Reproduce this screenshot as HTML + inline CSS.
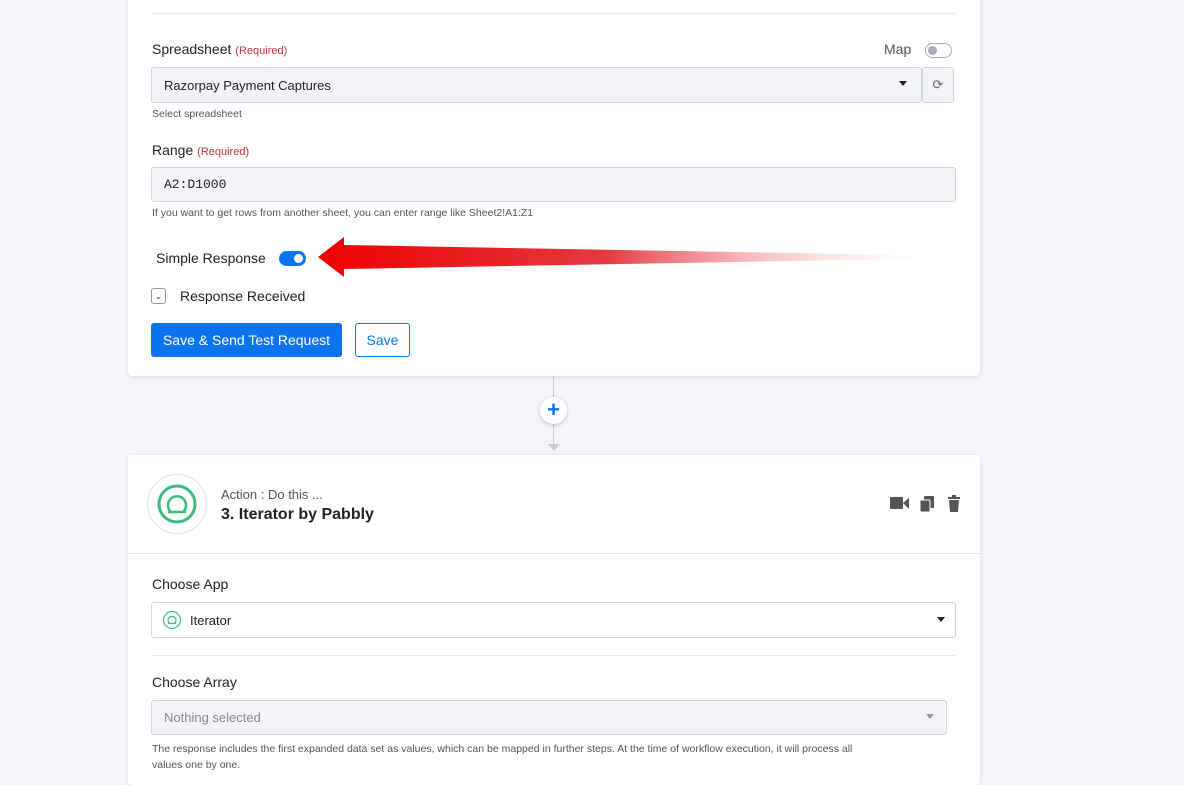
<!DOCTYPE html>
<html><head><meta charset="utf-8"><style>
*{box-sizing:border-box;margin:0;padding:0}
body{width:1184px;height:775px;background:#f3f5f8;font-family:"Liberation Sans",sans-serif;position:relative;overflow:hidden;color:#222}
.card{position:absolute;left:128px;width:852px;background:#fff;border-radius:4px;box-shadow:0 1px 4px rgba(0,0,0,.12)}
.abs{position:absolute}
.lbl{font-size:14px;color:#222}
.req{font-size:11px;color:#c4343f}
.inp{position:absolute;background:#f2f4f7;border:1px solid #cfd5dc;border-radius:3px;font-size:13px;color:#222;padding-left:12px;display:flex;align-items:center}
.help{font-size:10.5px;color:#555}
.caret{position:absolute;width:0;height:0;border-left:4px solid transparent;border-right:4px solid transparent;border-top:5px solid #222}
</style></head><body>
<div class="card" style="top:-5px;height:381px">
  <div class="abs" style="left:24px;top:18px;width:804px;height:1px;background:#e8eaee"></div>
  <div class="abs lbl" style="left:24px;top:46px">Spreadsheet <span class="req">(Required)</span></div>
  <div class="abs lbl" style="left:756px;top:46px;color:#555">Map</div>
  <div class="abs" style="left:797px;top:48px;width:27px;height:15px;border:1px solid #aab;border-radius:8px"><div style="position:absolute;left:2px;top:2px;width:9px;height:9px;border-radius:50%;background:#aab"></div></div>
  <div class="inp" style="left:23px;top:72px;width:771px;height:36px">Razorpay Payment Captures</div>
  <div class="caret" style="left:771px;top:86px"></div>
  <div class="inp" style="left:794px;top:72px;width:32px;height:36px;padding:0;justify-content:center;color:#666;font-size:13px">⟳</div>
  <div class="abs help" style="left:24px;top:113px">Select spreadsheet</div>
  <div class="abs lbl" style="left:24px;top:147px">Range <span class="req">(Required)</span></div>
  <div class="inp" style="left:23px;top:172px;width:805px;height:35px;font-family:'Liberation Mono',monospace;font-size:13px">A2:D1000</div>
  <div class="abs help" style="left:24px;top:212px">If you want to get rows from another sheet, you can enter range like Sheet2!A1:Z1</div>
  <div class="abs lbl" style="left:28px;top:255px">Simple Response</div>
  <div class="abs" style="left:151px;top:256px;width:27px;height:15px;background:#0a74ef;border-radius:8px"><div style="position:absolute;right:3px;top:3px;width:9px;height:9px;border-radius:50%;background:#fff"></div></div>
  <svg class="abs" style="left:190px;top:240px" width="640" height="45"><defs><linearGradient id="g" x1="0" x2="1"><stop offset="0" stop-color="#f00000"/><stop offset=".45" stop-color="#e33a40"/><stop offset="1" stop-color="#fff" stop-opacity="0"/></linearGradient></defs><polygon points="0,22 26,2 26,10 640,21 640,23 26,34 26,42" fill="url(#g)"/></svg>
  <div class="abs" style="left:23px;top:293px;width:15px;height:16px;border:1px solid #999;border-radius:3px;font-size:9px;text-align:center;line-height:14px;color:#333">⌄</div>
  <div class="abs lbl" style="left:52px;top:293px">Response Received</div>
  <div class="abs" style="left:23px;top:328px;width:191px;height:34px;background:#0a74ef;border-radius:3px;color:#fff;font-size:14px;text-align:center;line-height:34px">Save &amp; Send Test Request</div>
  <div class="abs" style="left:227px;top:328px;width:55px;height:34px;border:1px solid #0a74ef;border-radius:3px;color:#0a74ef;font-size:14px;text-align:center;line-height:32px">Save</div>
</div>
<div class="abs" style="left:553px;top:376px;width:1px;height:70px;background:#c8ccd2"></div>
<div class="abs" style="left:540px;top:397px;width:27px;height:27px;border-radius:50%;background:#fff;box-shadow:0 1px 4px rgba(0,0,0,.2);color:#0a74ef;font-size:22px;font-weight:bold;text-align:center;line-height:26px">+</div>
<div class="abs" style="left:548px;top:444px;border-left:6px solid transparent;border-right:6px solid transparent;border-top:7px solid #c8ccd2"></div>
<div class="card" style="top:455px;height:330px">
  <div class="abs" style="left:19px;top:19px;width:60px;height:60px;border-radius:50%;border:1px solid #dde3ee"></div>
  <svg class="abs" style="left:28px;top:28px" width="42" height="42" viewBox="0 0 42 42"><circle cx="21" cy="21" r="18" fill="none" stroke="#3dba7e" stroke-width="3"/><path d="M15 29 A9 9 0 1 1 27 29" fill="none" stroke="#3dba7e" stroke-width="2.5"/><path d="M12 29 H30" stroke="#3dba7e" stroke-width="2.5"/></svg>
  <div class="abs" style="left:93px;top:32px;font-size:13px;color:#555">Action : Do this ...</div>
  <div class="abs" style="left:93px;top:51px;font-size:16px;font-weight:bold;color:#222">3. Iterator by Pabbly</div>
  <svg class="abs" style="left:761px;top:40px" width="76" height="18"><rect x="1" y="2" width="13" height="12" rx="1" fill="#555"/><polygon points="14,8 20,3 20,14" fill="#555"/><rect x="35" y="1" width="10" height="12" rx="1" fill="#555"/><rect x="31" y="5" width="10" height="12" rx="1" fill="#555" stroke="#fff"/><rect x="59" y="2" width="12" height="2" fill="#555"/><rect x="63" y="0" width="4" height="2" fill="#555"/><path d="M60 5 H70 L69 17 H61Z" fill="#555"/></svg>
  <div class="abs" style="left:0;top:98px;width:852px;height:1px;background:#e3e7ec"></div>
  <div class="abs lbl" style="left:24px;top:121px">Choose App</div>
  <div class="inp" style="left:23px;top:147px;width:805px;height:36px;background:#fff;padding-left:38px">Iterator</div>
  <svg class="abs" style="left:34px;top:155px" width="20" height="20"><circle cx="10" cy="10" r="8.5" fill="none" stroke="#3dba7e" stroke-width="1.2"/><path d="M7.5 13.5 A4 4 0 1 1 12.5 13.5 M6 13.5 H14" fill="none" stroke="#3dba7e" stroke-width="1.2"/></svg>
  <div class="caret" style="left:809px;top:162px"></div>
  <div class="abs" style="left:24px;top:200px;width:804px;height:1px;background:#e8eaee"></div>
  <div class="abs lbl" style="left:24px;top:219px">Choose Array</div>
  <div class="inp" style="left:23px;top:245px;width:796px;height:35px;color:#888">Nothing selected</div>
  <div class="caret" style="left:798px;top:259px;border-top-color:#999"></div>
  <div class="abs help" style="left:24px;top:286px;width:820px;line-height:16px;white-space:nowrap">The response includes the first expanded data set as values, which can be mapped in further steps. At the time of workflow execution, it will process all<br>values one by one.</div>
</div>
</body></html>
